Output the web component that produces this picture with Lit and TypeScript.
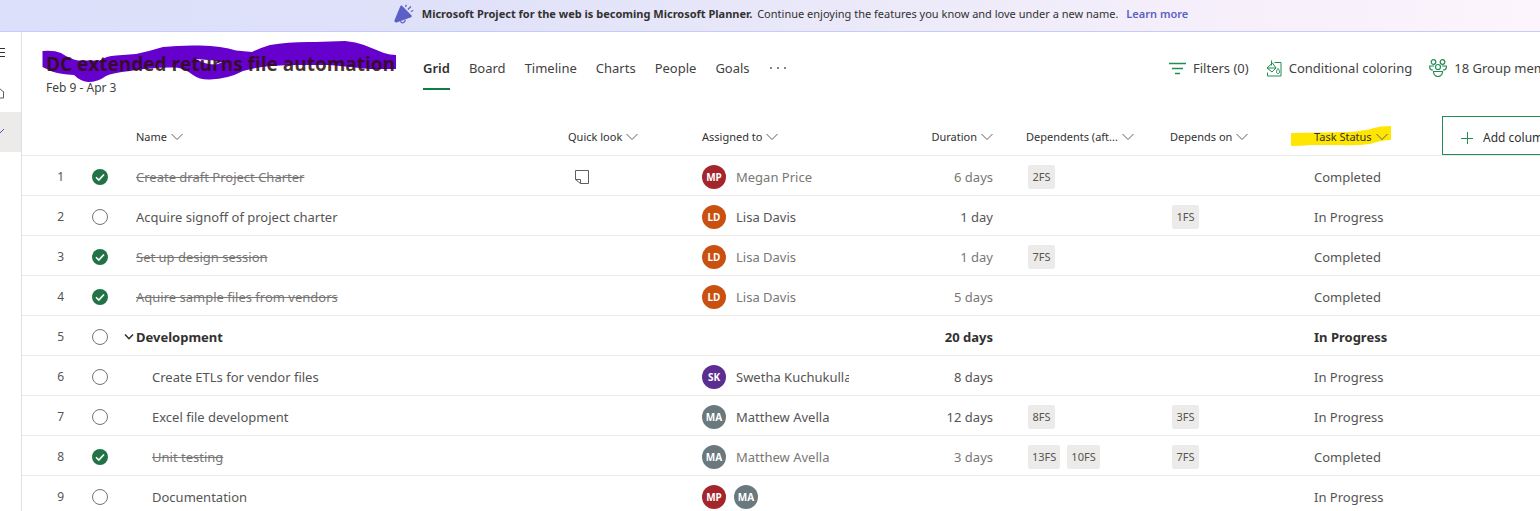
import { LitElement, html, css, svg, nothing } from "lit";
import { customElement, property } from "lit/decorators.js";
import { classMap } from "lit/directives/class-map.js";

interface Task {
  id: number;
  name: string;
  done?: boolean;
  summary?: boolean;
  child?: boolean;
  note?: boolean;
  people: string[];
  duration: string;
  dependents: string[];
  dependsOn: string[];
  status: string;
}

const MP = "Megan Price";
const LD = "Lisa Davis";
const SK = "Swetha Kuchukulla";
const MA = "Matthew Avella";

const TASKS: Task[] = [
  { id: 1, name: "Create draft Project Charter", done: true, note: true, people: [MP], duration: "6 days", dependents: ["2FS"], dependsOn: [], status: "Completed" },
  { id: 2, name: "Acquire signoff of project charter", people: [LD], duration: "1 day", dependents: [], dependsOn: ["1FS"], status: "In Progress" },
  { id: 3, name: "Set up design session", done: true, people: [LD], duration: "1 day", dependents: ["7FS"], dependsOn: [], status: "Completed" },
  { id: 4, name: "Aquire sample files from vendors", done: true, people: [LD], duration: "5 days", dependents: [], dependsOn: [], status: "Completed" },
  { id: 5, name: "Development", summary: true, people: [], duration: "20 days", dependents: [], dependsOn: [], status: "In Progress" },
  { id: 6, name: "Create ETLs for vendor files", child: true, people: [SK], duration: "8 days", dependents: [], dependsOn: [], status: "In Progress" },
  { id: 7, name: "Excel file development", child: true, people: [MA], duration: "12 days", dependents: ["8FS"], dependsOn: ["3FS"], status: "In Progress" },
  { id: 8, name: "Unit testing", done: true, child: true, people: [MA], duration: "3 days", dependents: ["13FS", "10FS"], dependsOn: ["7FS"], status: "Completed" },
  { id: 9, name: "Documentation", child: true, people: [MP, MA], duration: "", dependents: [], dependsOn: [], status: "In Progress" },
];

const initials = (name: string) => name.split(" ").map((w) => w[0]).join("");

const chevron = svg`<svg class="chev" width="12" height="8" viewBox="0 0 12 8" fill="none" stroke="currentColor" aria-hidden="true"><path d="M0.5 1 6 6.5 11.5 1"/></svg>`;

@customElement("person-chip")
export class PersonChip extends LitElement {
  @property() name = "";
  @property({ type: Boolean }) compact = false;

  static styles = css`
    :host { display: flex; align-items: center; gap: 10px; min-width: 0; }
    .coin {
      flex: none; width: 24px; height: 24px; border-radius: 50%;
      display: flex; align-items: center; justify-content: center;
      color: #fff; font-size: 10px; font-weight: 700; line-height: 12px;
    }
    .mp { background: #a4262c; }
    .ld { background: #ca5010; }
    .sk { background: #5c2e91; }
    .ma { background: #69797e; }
    .name { white-space: nowrap; overflow: hidden; }
  `;

  render() {
    const code = initials(this.name);
    return html`<span class="coin ${code.toLowerCase()}">${code}</span>
      ${this.compact ? nothing : html`<span class="name">${this.name}</span>`}`;
  }
}

@customElement("app-root")
export class AppRoot extends LitElement {
  static styles = css`
    :host {
      display: flex; flex-direction: column; height: 100vh; overflow: hidden;
      background: #fff; color: #424242;
      font-family: "Noto Sans", "Open Sans", sans-serif; font-size: 13px; line-height: 20px;
    }
    * { box-sizing: border-box; }
    button { font: inherit; color: inherit; background: none; border: 0; padding: 0; white-space: nowrap; }
    a { text-decoration: none; }

    .banner {
      flex: none; height: 32px; border-bottom: 1px solid #c5cbfa;
      background: linear-gradient(90deg, #dce0fa 0%, #dfe1f9 28%, #ebe9f9 55%, #f7f0fb 82%, #fcf5fd 100%);
      display: flex; align-items: center; justify-content: center; gap: 8px;
      font-size: 11px; line-height: 16px; color: #323130; padding: 0 0 4px 42px; white-space: nowrap;
    }
    .banner p { margin: 0; }
    .banner b { font-weight: 700; margin-right: 2px; }
    .banner a { color: #5b5fc7; font-weight: 600; }

    .shell { flex: 1; display: flex; min-height: 0; }
    .rail { flex: none; width: 22px; border-right: 1px solid #e1dfdd; overflow: hidden; }
    .rail button { display: flex; width: 100%; height: 40px; align-items: center; justify-content: flex-start; }
    .rail .on { background: #edebe9; }

    .main { flex: 1; min-width: 0; overflow: hidden; }
    .wide { width: calc(100% + 64px); }

    .head { display: flex; height: 84px; padding: 20px 0 0 24px; }
    .title { position: relative; width: 377px; }
    h1 { position: relative; z-index: 1; margin: 0; font-family: "Open Sans", sans-serif; font-size: 19px; line-height: 24px; font-weight: 700; color: rgba(45, 15, 15, 0.85); white-space: nowrap; }
    .dates { margin: 0; font-size: 12px; line-height: 24px; }
    .ink { position: absolute; pointer-events: none; }
    .ink.purple { left: -4px; top: -12px; }
    .ink.yellow { left: -24px; top: -3px; }

    .tabs { display: flex; gap: 19px; align-items: flex-start; }
    .tab { height: 38px; padding-bottom: 4px; border-bottom: 2px solid transparent; }
    .tab.on { font-weight: 600; color: #323130; border-bottom-color: #107c41; }
    .tab svg { display: block; }
    .tools { display: flex; gap: 17px; margin-left: auto; width: 435px; }
    .tool { display: flex; gap: 7px; align-items: center; height: 32px; }
    .tool svg { color: #218d51; flex: none; }

    table { width: 100%; table-layout: fixed; border-collapse: separate; border-spacing: 0; }
    th { height: 40px; padding: 2px 0 0 14px; text-align: left; font-weight: 400; font-size: 11px; line-height: 16px; color: #323130; border-bottom: 1px solid #edebe9; }
    td { height: 40px; padding: 2px 0 0 14px; border-bottom: 1px solid #edebe9; color: #555; }
    .hbtn { position: relative; display: inline-flex; align-items: center; gap: 4px; }
    .hbtn span, .chev { position: relative; z-index: 1; }
    .chev { color: #605e5c; }
    .c-num { width: 56px; } .c-check { width: 44px; } .c-look { width: 134px; }
    .c-who { width: 172px; } .c-dur { width: 152px; } .c-dep { width: 144px; }
    .c-stat { width: 142px; } .c-add { width: 162px; }
    td.num { text-align: right; padding: 2px 14px 0 0; font-size: 12px; }
    td.check { padding: 3px 0 0; }
    .check input {
      appearance: none; display: block; width: 16px; height: 16px; margin: 0 auto;
      border: 1px solid #767472; border-radius: 50%; background: #fff;
    }
    .check input:checked {
      border: 0;
      background: #217346 url("data:image/svg+xml,%3Csvg xmlns='http://www.w3.org/2000/svg' viewBox='0 0 16 16'%3E%3Cpath d='M4 8.2 6.8 11 12 5.5' fill='none' stroke='white' stroke-width='1.6'/%3E%3C/svg%3E");
    }
    .name div { display: flex; align-items: center; }
    .child .name { padding-left: 30px; }
    .summary .name { padding-left: 0; }
    .summary .name button { width: 14px; height: 20px; display: flex; align-items: center; justify-content: center; }
    .summary td:not(.num) { font-weight: 700; color: #323130; }
    .done .name span { text-decoration: line-through; }
    .done .name, .done .who, .done .dur { color: #797775; }
    td.look { padding-left: 20px; }
    td.look svg { display: block; }
    .who div { display: flex; gap: 8px; width: 147px; }
    .dur { text-align: right; padding-left: 0; padding-right: 19px; }
    td.dep { padding-left: 16px; }
    .dep div { display: flex; gap: 7px; }
    .tag { height: 24px; padding: 0 4px; border-radius: 2px; background: #edebe9; color: #555; font-size: 11px; line-height: 24px; min-width: 27px; text-align: center; }
    th.add { padding: 0; }
    .add button { display: flex; align-items: center; gap: 10px; width: 100%; height: 39px; padding: 4px 0 0 18px; border: 1px solid #218d51; font-size: 12px; }
    .add svg { color: #218d51; }
  `;

  private column(label: string) {
    return html`<button class="hbtn"><span>${label}</span>${chevron}</button>`;
  }

  private row(t: Task) {
    return html`<tr class=${classMap({ done: !!t.done, summary: !!t.summary, child: !!t.child })}>
      <td class="num">${t.id}</td>
      <td class="check"><input type="checkbox" aria-label="Complete ${t.name}" .checked=${!!t.done} /></td>
      <td class="name"><div>
        ${t.summary ? html`<button aria-label="Collapse"><svg width="10" height="8" viewBox="0 0 10 8" fill="none" stroke="#323130" stroke-width="1.6"><path d="M1 1.5 5 5.700 9 1.500"/></svg></button>` : nothing}
        <span>${t.name}</span></div></td>
      <td class="look">${t.note ? html`<svg width="16" height="16" viewBox="0 0 16 16" fill="none" stroke="#605e5c"><path d="M1.500 10.500V1.500h13v13H6.500L1.500 10.500h5v4"/></svg>` : nothing}</td>
      <td class="who"><div>${t.people.map((p) => html`<person-chip name=${p} ?compact=${t.people.length > 1}></person-chip>`)}</div></td>
      <td class="dur">${t.duration}</td>
      <td class="dep"><div>${t.dependents.map((d) => html`<span class="tag">${d}</span>`)}</div></td>
      <td class="dep"><div>${t.dependsOn.map((d) => html`<span class="tag">${d}</span>`)}</div></td>
      <td>${t.status}</td>
      <td></td>
    </tr>`;
  }

  render() {
    return html`
      <div class="banner" role="status">
        <svg width="20" height="20" viewBox="0 0 20 20" aria-hidden="true">
          <path d="M8 1.800 17.600 11.600c.5.6.2 1.400-.5 1.600L2.600 18.400c-.6.2-1.100.1-1.500-.3l-.4-.4c-.4-.4-.4-.9-.2-1.500L6.300 2.200c.3-.8 1.100-1 1.700-.4Z" fill="#5b5fc7"/>
          <path d="M6.500 17.200c1.300 2.700 4.600 1.800 4.800-1.500" fill="none" stroke="#5b5fc7" stroke-width="1.300"/>
          <path d="M12.300.8 11.500 3M17 2.500 13.800 5.500M19.300 6.500l-2.500 1" stroke="#5b5fc7" stroke-width="1.200"/>
        </svg>
        <p><b>Microsoft Project for the web is becoming Microsoft Planner.</b> Continue enjoying the features you know and love under a new name.</p>
        <a href="#">Learn more</a>
      </div>
      <div class="shell">
        <nav class="rail" aria-label="Navigation">
          <button aria-label="Menu"><svg width="6" height="12" viewBox="0 0 6 12" stroke="#323130"><path d="M0 2.500h5M0 6.500h5M0 10.500h5"/></svg></button>
          <button aria-label="Home"><svg width="6" height="14" viewBox="0 0 6 14" fill="none" stroke="#605e5c"><path d="M-2 2 4 7.500M3.500 6.500v6.500H-1"/></svg></button>
          <button class="on" aria-label="Projects"><svg width="6" height="8" viewBox="0 0 6 8" stroke="#4b53bc"><path d="M-1 6 4 1"/></svg></button>
        </nav>
        <main class="main"><div class="wide">
          <header class="head">
            <div class="title">
              <h1>DC extended returns file automation</h1>
              <p class="dates">Feb 9 - Apr 3</p>
              <svg class="ink purple" width="354" height="44" viewBox="42 40 354 44" aria-hidden="true">
                <path fill="#6600cc" fill-rule="evenodd" d="M42.500 51Q54 50 61 53Q70 59 78 60.500H100Q106 56 116 55.500L136 54Q150 51 163 47Q180 45 200 45.500Q222 46 236 50.500L252 52Q260 48 270 45Q290 41.500 315 42L345 41Q356 42 364 45L384 53Q390 55 396 55V69H370L330 65H300Q262 65 243 71Q228 79 210 79.500Q200 80 193 75Q184 68 176 67.500Q150 67 130 71Q112 73 106 76Q98 82 88 82Q80 81 74 75Q60 74 52 71.500L42.500 67ZM196 59L214 60.500 222 62.500 216 64.500Q205 64.500 196 59Z"/>
              </svg>
            </div>
            <nav class="tabs" aria-label="Views">
              <button class="tab on">Grid</button><button class="tab">Board</button><button class="tab">Timeline</button>
              <button class="tab">Charts</button><button class="tab">People</button><button class="tab">Goals</button>
              <button class="tab" aria-label="More"><svg width="18" height="4" viewBox="0 0 18 4" fill="#605e5c"><circle cx="2" cy="2" r="1"/><circle cx="9" cy="2" r="1"/><circle cx="16" cy="2" r="1"/></svg></button>
            </nav>
            <div class="tools">
              <button class="tool"><svg width="17" height="13" viewBox="0 0 17 13" stroke="currentColor" stroke-width="1.500"><path d="M0 1.500h17M3 6.500h11M6 11.500h5"/></svg>Filters (0)</button>
              <button class="tool"><svg width="16" height="17" viewBox="0 0 16 17" fill="none" stroke="currentColor"><path d="M8.500 2.500h6.500v13.500H1.500V12.500M1 8 6.500 3l3.500 5-4 4zM1 8h9M5.500.5v5M12 8.500c-2 2.500-2 5 0 5s2-2.500 0-5Z"/></svg>Conditional coloring</button>
              <button class="tool"><svg width="18" height="18" viewBox="0 0 18 18" fill="none" stroke="currentColor" stroke-width="1.200"><circle cx="4.500" cy="3" r="2.300"/><circle cx="13.500" cy="3" r="2.300"/><circle cx="9" cy="8" r="2.500"/><path d="M5 7H.7v1.500C.7 10 2 11 4 11M13 7h4.300v1.500c0 1.500-1.300 2.500-3.300 2.500M4.500 12.500h9c0 3-2 5-4.500 5s-4.500-2-4.500-5Z"/></svg>18 Group members</button>
            </div>
          </header>
          <table>
            <thead><tr>
              <th class="c-num"></th><th class="c-check"></th>
              <th>${this.column("Name")}</th>
              <th class="c-look">${this.column("Quick look")}</th>
              <th class="c-who">${this.column("Assigned to")}</th>
              <th class="c-dur dur">${this.column("Duration")}</th>
              <th class="c-dep">${this.column("Dependents (aft...")}</th>
              <th class="c-dep">${this.column("Depends on")}</th>
              <th class="c-stat"><button class="hbtn">
                <svg class="ink yellow" width="102" height="24" viewBox="0 0 102 24" aria-hidden="true"><path fill="#ffe600" d="M1 7 58 6Q74 5 84 2Q90 0 101 0V14Q92 14 80 18Q66 20 50 19L22 19Q10 20 1 20Z"/></svg>
                <span>Task Status</span>${chevron}</button></th>
              <th class="c-add add"><button><svg width="12" height="12" viewBox="0 0 12 12" stroke="currentColor"><path d="M6.500 0v12M0 6.500h12"/></svg>Add column</button></th>
            </tr></thead>
            <tbody>${TASKS.map((t) => this.row(t))}</tbody>
          </table>
        </div></main>
      </div>`;
  }
}
